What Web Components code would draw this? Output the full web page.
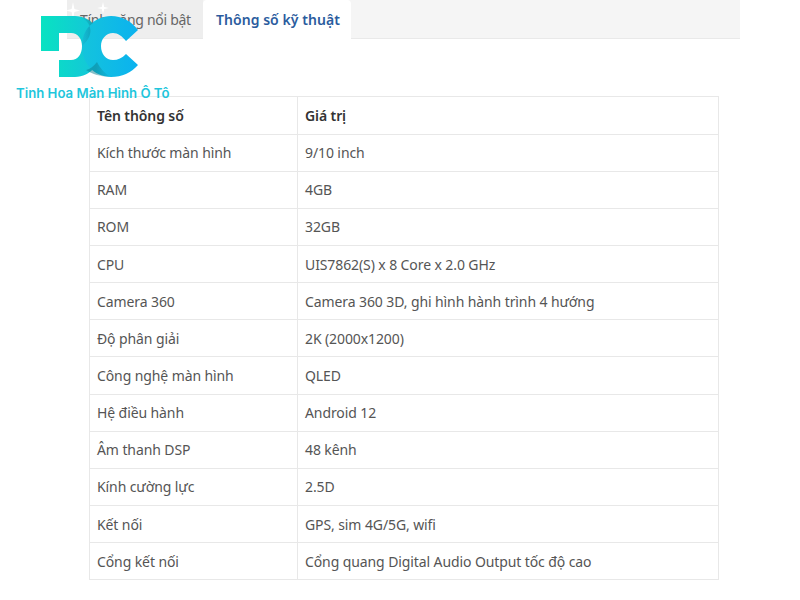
<!DOCTYPE html>
<html>
<head>
<meta charset="utf-8">
<style>
	html, body { margin: 0; background: #fff; }
	body { font-family: "Noto Sans", sans-serif; height: 600px; overflow: hidden; position: relative; }
</style>
</head>
<body>
<spec-page>
	<spec-tabs></spec-tabs>
	<spec-table></spec-table>
</spec-page>
<site-logo></site-logo>
<script>
class SpecPage extends HTMLElement {
	constructor() {
		super();
		this.attachShadow({ mode: 'open' });
		this.shadowRoot.innerHTML = `
		<style>
			:host { display: flex; flex-direction: column; padding-left: 67px; width: 673px; gap: 58px; }
		</style>
		<slot></slot>`;
	}
}

class SpecTabs extends HTMLElement {
	constructor() {
		super();
		this.attachShadow({ mode: 'open' });
		this.shadowRoot.innerHTML = `
		<style>
			:host { display: flex; height: 38px; background: #f5f5f5; border-bottom: 1px solid #e9e9e9; font-size: 14px; letter-spacing: -0.28px; white-space: nowrap; }
			.tab { box-sizing: border-box; display: flex; align-items: center; padding: 0 13px; color: #666; background: #eee; width: 136px; }
			.tab.active { background: #fff; color: #2b5c9e; font-weight: 600; letter-spacing: 0.05px; width: 148px; height: 39px; border-radius: 4px 4px 0 0; }
		</style>
		<div class="tab">Tính năng nổi bật</div>
		<div class="tab active">Thông số kỹ thuật</div>`;
	}
}

const rows = [
	['Kích thước màn hình', '9/10 inch'],
	['RAM', '4GB'],
	['ROM', '32GB'],
	['CPU', 'UIS7862(S) x 8 Core x 2.0 GHz'],
	['Camera 360', 'Camera 360 3D, ghi hình hành trình 4 hướng'],
	['Độ phân giải', '2K (2000x1200)'],
	['Công nghệ màn hình', 'QLED'],
	['Hệ điều hành', 'Android 12'],
	['Âm thanh DSP', '48 kênh'],
	['Kính cường lực', '2.5D'],
	['Kết nối', 'GPS, sim 4G/5G, wifi'],
	['Cổng kết nối', 'Cổng quang Digital Audio Output tốc độ cao']
];

class SpecTable extends HTMLElement {
	constructor() {
		super();
		this.attachShadow({ mode: 'open' });
		const body = rows.map(r => `<div class="row"><div>${r[0]}</div><div>${r[1]}</div></div>`).join('');
		this.shadowRoot.innerHTML = `
		<style>
			:host { display: block; margin-left: 22px; margin-top: -0.6px; width: 630px; border: 1px solid #e8e8e8; border-bottom: 0; box-sizing: border-box; font-size: 14px; letter-spacing: -0.1px; color: #555; }
			.row { display: grid; grid-template-columns: 207px 1fr; height: 37.15px; box-sizing: border-box; border-bottom: 1px solid #e8e8e8; }
			.row > div { display: flex; align-items: center; padding: 0 7px; }
			.row > div + div { border-left: 1px solid #e8e8e8; }
			.head { font-weight: 600; color: #333; }
		</style>
		<div class="row head"><div>Tên thông số</div><div>Giá trị</div></div>
		${body}`;
	}
}

class SiteLogo extends HTMLElement {
	constructor() {
		super();
		this.attachShadow({ mode: 'open' });
		this.shadowRoot.innerHTML = `
		<style>
			:host { position: absolute; left: 16px; top: 0; width: 160px; height: 100px; }
			svg { position: absolute; left: 0; top: 0; }
			span { position: absolute; left: 0; top: 85px; font: 600 13.2px/16px Inter, sans-serif; color: #1fc6dc; white-space: nowrap; }
		</style>
		<svg width="140" height="84" viewBox="16 0 140 84">
			<defs>
				<linearGradient id="d" gradientUnits="userSpaceOnUse" x1="42" x2="100" y1="0" y2="0"><stop offset="0" stop-color="#08e2c2"/><stop offset="1" stop-color="#16c2dc"/></linearGradient>
				<linearGradient id="c" gradientUnits="userSpaceOnUse" x1="82" x2="138" y1="0" y2="0"><stop offset="0" stop-color="#14c4dc"/><stop offset="1" stop-color="#0bb2ef"/></linearGradient>
				<linearGradient id="s1" gradientUnits="userSpaceOnUse" x1="80" x2="95" y1="0" y2="0"><stop offset="0" stop-color="#0d7f90" stop-opacity="0"/><stop offset="1" stop-color="#0d7f90" stop-opacity=".55"/></linearGradient>
				<linearGradient id="s2" gradientUnits="userSpaceOnUse" x1="112" x2="96" y1="0" y2="0"><stop offset="0" stop-color="#0d7f90" stop-opacity="0"/><stop offset="1" stop-color="#0d7f90" stop-opacity=".5"/></linearGradient>
			</defs>
			<path d="M73 2L74.4 9L80 10.5L74.4 12L73 19L71.6 12L66 10.5L71.6 9Z" fill="#fff"/>
			<path d="M103 2L104.2 7L109 8L104.2 9L103 14L101.8 9L97 8L101.8 7Z" fill="#fff"/>
			<path d="M41 16H75C91 16 101 30 101 46C101 63 91 77 75 77H59V60H71C78 60 82 54 82 46C82 39 78 33 71 33H59V51H41Z" fill="url(#d)"/>
			<path d="M138 30L126 41C122 36 118 33 113 33C106 33 101 39 101 46C101 54 106 60 113 60C118 60 122 58 126 54L138 65C131 73 122 77 111 77C94 77 82 63 82 46C82 30 94 16 111 16C122 16 131 21 138 30Z" fill="url(#c)"/>
			<path d="M82 46C82 36 86 28 93 23C89 19 84 17 78 16C90 20 97 33 82 46Z" fill="url(#s1)"/>
			<path d="M86 70C92 74 101 77 111 77C105 74 100 68 97 62C94 66 90 69 86 70Z" fill="url(#s2)"/>
		</svg>
		<span>Tinh Hoa Màn Hình Ô Tô</span>`;
	}
}

customElements.define('spec-page', SpecPage);
customElements.define('spec-tabs', SpecTabs);
customElements.define('spec-table', SpecTable);
customElements.define('site-logo', SiteLogo);
</script>
</body>
</html>
